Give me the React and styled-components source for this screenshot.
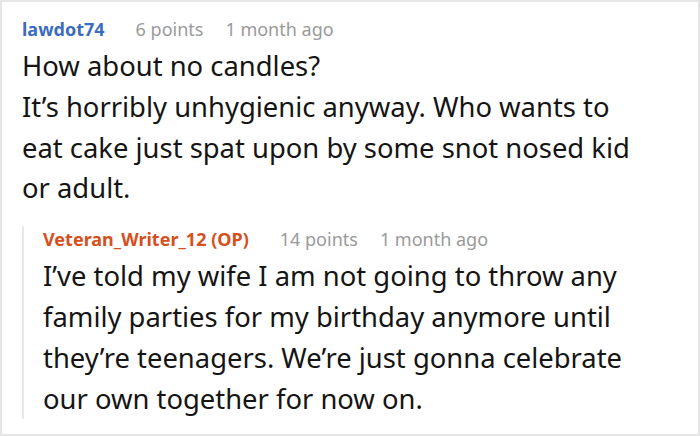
import React from 'react'
import styled, { createGlobalStyle } from 'styled-components'

const GlobalStyle = createGlobalStyle`
  html, body {
    margin: 0;
    padding: 0;
    background: #fff;
  }
  * {
    box-sizing: border-box;
  }
`

const Card = styled.div`
  width: 700px;
  height: 436px;
  border: 2px solid #e6e6e6;
  padding: 14px 48px 0 20px;
  font-family: 'Noto Sans', 'Open Sans', sans-serif;
  background: #fff;
  overflow: hidden;
`

const Comment = styled.div`
  display: flex;
  flex-direction: column;
`

const Reply = styled.div`
  display: flex;
  flex-direction: column;
  margin-top: 17px;
  border-left: 2px solid #e8e8e8;
  padding-left: 19px;
`

const Meta = styled.div`
  display: flex;
  align-items: baseline;
  font-size: 18px;
  line-height: 26px;
`

const Author = styled.span`
  color: ${p => (p.op ? '#d6501d' : '#3b6cbf')};
  font-weight: 700;
  margin-right: 31px;
`

const Points = styled.span`
  color: #9a9a9a;
  margin-right: 22px;
`

const Time = styled.span`
  color: #9a9a9a;
`

const Body = styled.p`
  margin: 4px 0 0 0;
  font-size: 27.4px;
  line-height: 40.8px;
  color: #151515;
`

function App () {
  return (
    <>
      <GlobalStyle />
      <Card>
        <Comment>
          <Meta>
            <Author>lawdot74</Author>
            <Points>6 points</Points>
            <Time>1 month ago</Time>
          </Meta>
          <Body>
            How about no candles?
            <br />
            It’s horribly unhygienic anyway. Who wants to eat cake just spat
            upon by some snot nosed kid or adult.
          </Body>
        </Comment>
        <Reply>
          <Meta>
            <Author op>Veteran_Writer_12 (OP)</Author>
            <Points>14 points</Points>
            <Time>1 month ago</Time>
          </Meta>
          <Body>
            I’ve told my wife I am not going to throw any family parties for
            my birthday anymore until they’re teenagers. We’re just gonna
            celebrate our own together for now on.
          </Body>
        </Reply>
      </Card>
    </>
  )
}

export default App
